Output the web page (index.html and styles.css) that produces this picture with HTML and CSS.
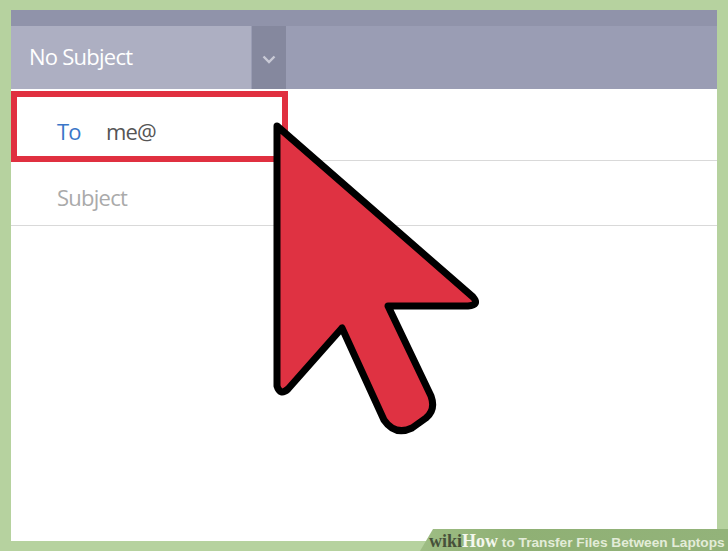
FILE: index.html
```html
<!DOCTYPE html>
<html lang="en">
<head>
<meta charset="utf-8">
<title>How to Transfer Files Between Laptops</title>
<link rel="stylesheet" href="styles.css">
</head>
<body>
<main class="card">
  <header class="head">
    <div class="strip"></div>
    <div class="bar">
      <div class="subject-select">No Subject</div>
      <div class="chevron-box">
        <svg class="chevron" width="14" height="9" viewBox="0 0 14 9"><path d="M1.5 1.500 7 7l5.500-5.500" fill="none" stroke="#c9cad6" stroke-width="2.400"/></svg>
      </div>
    </div>
  </header>
  <div class="gap"></div>
  <div class="to-row">
    <div class="to-box"><span class="to-label">To</span><span class="to-value">me@</span></div>
  </div>
  <div class="subject-row">Subject</div>
</main>
<svg class="cursor" width="728" height="551" viewBox="0 0 728 551">
  <path d="M277 126 L473 297 Q480 305 468 306 L388 306 L431 396 Q436 410 426 418 L412 428 Q395 436 384 420 L342 328 L288 389 Q280 396 277 386 Z" fill="#df3242" stroke="#000" stroke-width="7" stroke-linejoin="round"/>
</svg>
<div class="caption"><span class="wiki">wiki</span><span class="how">How</span><span class="title"> to Transfer Files Between Laptops</span></div>
</body>
</html>
```
FILE: styles.css
```css
html, body { margin: 0; padding: 0; }
body {
  width: 728px;
  height: 551px;
  overflow: hidden;
  background: #b6d29f;
  position: relative;
  font-family: "Open Sans", "Noto Sans", sans-serif;
}
.card {
  margin: 10px 11px 0;
  width: 706px;
  height: 531px;
  background: #fff;
  display: flex;
  flex-direction: column;
}
.strip { height: 16px; background: #9093aa; }
.bar { display: flex; height: 63px; background: #9a9db4; }
.subject-select {
  width: 240px;
  padding-left: 18px;
  box-sizing: border-box;
  background: #adafc2;
  color: #fff;
  font-size: 22px;
  letter-spacing: -0.75px;
  line-height: 61px;
}
.chevron-box {
  width: 34px;
  margin-left: 1px;
  background: #85889e;
  display: flex;
  align-items: center;
  justify-content: center;
}
.chevron { margin-top: 3px; }
.gap { height: 2px; }
.to-row { height: 69px; border-bottom: 1px solid #d9d9d9; }
.to-box {
  width: 277px;
  height: 71px;
  box-sizing: border-box;
  border: 6px solid #e03040;
  display: flex;
  align-items: center;
  padding: 8px 0 0 40px;
  font-size: 22px;
  letter-spacing: -0.9px;
}
.to-label { color: #3a76c8; width: 49px; }
.to-value { color: #555; }
.subject-row {
  height: 64px;
  border-bottom: 1px solid #d9d9d9;
  padding-left: 46px;
  font-size: 22px;
  letter-spacing: -0.75px;
  line-height: 73px;
  color: #aaa;
}
.cursor { position: absolute; left: 0; top: 0; }
.caption {
  position: absolute;
  left: 420px;
  bottom: 0;
  width: 308px;
  height: 22px;
  line-height: 24px;
  padding-left: 9px;
  box-sizing: border-box;
  background: linear-gradient(90deg, #9ebd84, #8fb074 30%, #93b37a);
  clip-path: polygon(13px 0, 100% 0, 100% 100%, 0 100%);
  white-space: nowrap;
  font-family: "Liberation Sans", sans-serif;
  font-size: 13.7px;
  font-weight: bold;
  color: #e3ecd8;
}
.wiki, .how { font-family: "Liberation Serif", serif; font-size: 18px; font-weight: bold; }
.wiki { color: #46503a; }
.how { color: #f4f7ee; }
```
